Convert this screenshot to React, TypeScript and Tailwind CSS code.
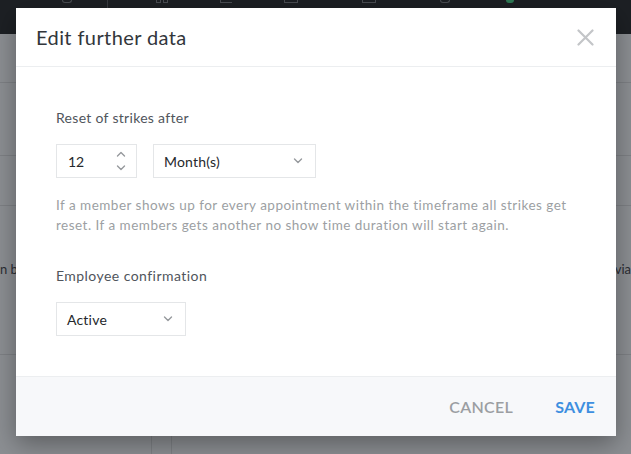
import React from "react";

const Chevron = ({ up = false }: { up?: boolean }) => (
  <svg width="10" height="6" viewBox="0 0 10 6" fill="none" className="block">
    <path
      d={up ? "M1.5 5L5 1.5L8.5 5" : "M1.5 1L5 4.5L8.5 1"}
      stroke="#96999d"
      strokeWidth="1.4"
      strokeLinecap="round"
      strokeLinejoin="round"
    />
  </svg>
);

const Select = ({ value, width }: { value: string; width: string }) => (
  <div
    className={`flex h-[34px] ${width} items-center justify-between border border-[#e4e6e8] bg-white pl-[10px] pr-[12px]`}
  >
    <span className="text-[14px] tracking-[0.2px] text-[#25282c]">{value}</span>
    <Chevron />
  </div>
);

// stubs of the nav icons that peek out above the dialog
const TopIcons = () => (
  <div className="flex h-[34px] items-start bg-[#1d2024]">
    <div className="ml-[62px] mt-0 h-[3px] w-[10px] rounded-b-sm border-x border-b border-[#4a4d52]" />
    <div className="ml-[35px] h-[26px] w-px bg-[#383b40]" />
    <div className="ml-[48px] flex gap-[2px]">
      <div className="h-[3px] w-[5px] border-x border-b border-[#4a4d52]" />
      <div className="h-[3px] w-[5px] border-x border-b border-[#4a4d52]" />
    </div>
    <div className="ml-[52px] h-[3px] w-[12px] border-b border-l border-[#4a4d52]" />
    <div className="ml-[52px] h-[3px] w-[14px] border-x border-b border-[#4a4d52]" />
    <div className="ml-[64px] h-[3px] w-[14px] border-x border-b border-[#4a4d52]" />
    <div className="ml-[64px] h-[3px] w-[10px] rounded-b-full border-x border-b border-[#4a4d52]" />
    <div className="ml-[56px] h-[3px] w-[8px] rounded-b-full bg-[#2f7a55]" />
  </div>
);

const Backdrop = () => (
  <div className="absolute inset-0 flex flex-col bg-[#8c8f93] font-['Lato',sans-serif]">
    <TopIcons />
    <div className="h-[49px] border-b border-[#7e8185]" />
    <div className="h-[73px] border-b border-[#7e8185]" />
    <div className="h-[50px] border-b border-[#7e8185]" />
    <div className="flex h-[149px] items-center justify-between border-b border-[#7e8185] pb-[20px]">
      <span className="text-[13px] text-[#2b2e33]">n b</span>
      <span className="text-[13px] text-[#2b2e33]">via</span>
    </div>
    <div className="flex flex-1">
      <div className="ml-[151px] w-[21px] border-x border-[#7e8185]" />
    </div>
  </div>
);

export default function App() {
  return (
    <div className="relative h-[454px] w-[631px] overflow-hidden font-['Lato',sans-serif]">
      <Backdrop />

      <div className="absolute left-[16px] top-[8px] flex h-[428px] w-[600px] flex-col bg-white shadow-[0_8px_24px_rgba(0,0,0,0.35)]">
        <div className="flex h-[59px] items-center justify-between border-b border-[#eceef0] pl-[20px] pr-[22px]">
          <h2 className="text-[20px] leading-none tracking-[0.4px] text-[#32363b]">Edit further data</h2>
          <svg width="17" height="17" viewBox="0 0 17 17" fill="none">
            <path d="M1.5 1.5L15.5 15.5M15.5 1.5L1.5 15.5" stroke="#c3c5c8" strokeWidth="2.2" strokeLinecap="round" />
          </svg>
        </div>

        <div className="flex-1 px-[40px] pt-[41px]">
          <p className="text-[14px] leading-[20px] tracking-[0.3px] text-[#50555c]">Reset of strikes after</p>

          <div className="mt-[16px] flex gap-[16px]">
            <div className="flex h-[34px] w-[81px] items-center justify-between border border-[#e4e6e8] bg-white pl-[11px] pr-[10px]">
              <span className="text-[14px] text-[#25282c]">12</span>
              <div className="flex flex-col gap-[8px]">
                <Chevron up />
                <Chevron />
              </div>
            </div>
            <Select value="Month(s)" width="w-[163px]" />
          </div>

          <p className="mt-[17px] text-[13.5px] leading-[20px] tracking-[0.48px] text-[#9c9fa3]">
            If a member shows up for every appointment within the timeframe all strikes get reset. If a members gets another no show time duration will start again.
          </p>

          <p className="mt-[31px] text-[14px] leading-[20px] tracking-[0.45px] text-[#50555c]">Employee confirmation</p>

          <div className="mt-[16px]">
            <Select value="Active" width="w-[130px]" />
          </div>
        </div>

        <div className="flex h-[60px] items-center justify-end gap-[42px] border-t border-[#eceef0] bg-[#f7f8fa] pr-[21px]">
          <button className="text-[16px] font-semibold tracking-[0.3px] text-[#9b9ea2]">CANCEL</button>
          <button className="text-[16px] font-bold tracking-[0.2px] text-[#3d8fe0]">SAVE</button>
        </div>
      </div>
    </div>
  );
}
